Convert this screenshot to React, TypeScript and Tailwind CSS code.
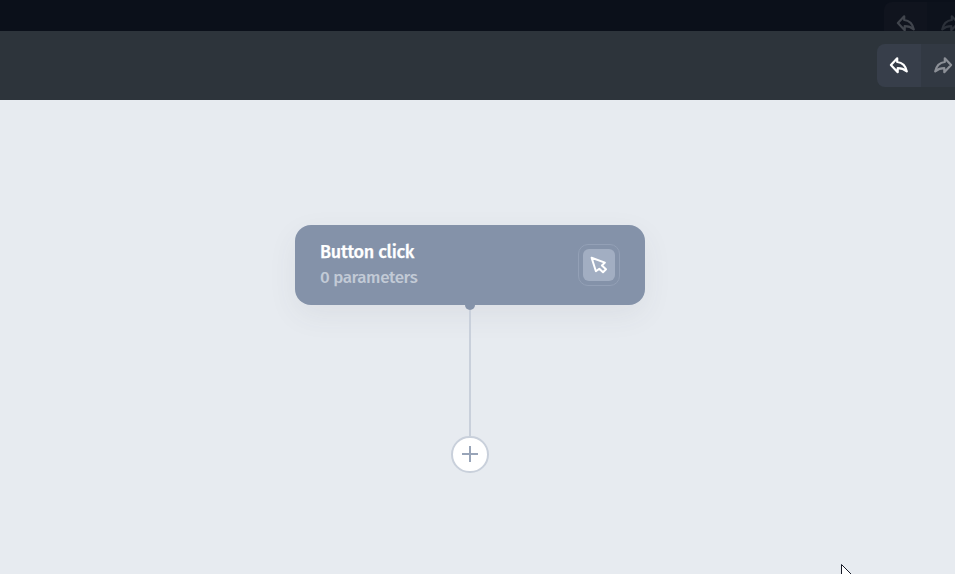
function ReplyIcon({ flip = false }: { flip?: boolean }) {
  return (
    <svg
      width="20"
      height="20"
      viewBox="0 0 20 20"
      fill="none"
      stroke="currentColor"
      strokeWidth="2.2"
      strokeLinejoin="round"
      strokeLinecap="round"
      className={flip ? "mb-px shrink-0 -scale-x-100" : "mb-px shrink-0"}
    >
      <path d="M1.9 10 8.2 3.3V7C13.4 7.4 16.6 11 17.8 16.4 14.9 14 12.3 13.2 8.7 13.2V17.2Z" />
    </svg>
  );
}

function HistoryButtons() {
  return (
    <div className="flex h-[43px] w-[88px] shrink-0 overflow-hidden rounded-lg">
      <button className="flex w-11 items-center justify-center bg-[#373e4a] text-white">
        <ReplyIcon />
      </button>
      <button className="flex w-11 items-center justify-center bg-[#323943] text-[#8c9097]">
        <ReplyIcon flip />
      </button>
    </div>
  );
}

function GhostHistoryButtons() {
  return (
    <div className="flex h-[43px] w-[88px] shrink-0 overflow-hidden rounded-lg">
      <div className="flex w-[43px] items-center justify-center bg-[#10141e] text-[#41454d]">
        <ReplyIcon />
      </div>
      <div className="flex w-[45px] shrink-0 items-center justify-center bg-[#0d121c] text-[#2b3039]">
        <ReplyIcon flip />
      </div>
    </div>
  );
}

function TriggerNode() {
  return (
    <div className="flex h-20 w-[350px] items-center justify-between rounded-2xl bg-[#8492a9] px-[25px] shadow-[0_10px_30px_rgba(70,75,85,0.07)]">
      <div className="whitespace-nowrap font-['Fira_Sans','Noto_Sans',sans-serif]">
        <div className="text-[18px] leading-[26px] font-medium tracking-[-0.26px] text-white [-webkit-text-stroke:0.25px_white]">
          Button click
        </div>
        <div className="text-[17px] leading-[26px] font-medium tracking-[-0.42px] text-[#c2cad6]">
          0 parameters
        </div>
      </div>
      <div className="flex size-[42px] items-center justify-center rounded-[10px] border border-[#93a0b6]">
        <div className="flex size-8 items-center justify-center rounded-md bg-[#a2aec2] text-white">
          <svg
            width="20"
            height="20"
            viewBox="0 0 20 20"
            fill="none"
            stroke="currentColor"
            strokeWidth="2"
            strokeLinejoin="round"
          >
            <path d="M2.6 2.8 15.9 7.6 12.9 10.5 17 14.3 14 17.3 10.3 13.7 6.9 16.2Z" />
          </svg>
        </div>
      </div>
    </div>
  );
}

export default function App() {
  return (
    <div className="flex h-[574px] w-[955px] flex-col overflow-hidden bg-[#e7ebf0]">
      <div className="flex h-[31px] shrink-0 items-start overflow-hidden bg-[#0b101a] pt-0.5 pl-[884px]">
        <GhostHistoryButtons />
      </div>
      <header className="flex h-[69px] shrink-0 items-start overflow-hidden bg-[#2d343b] pt-[13px] pl-[877px]">
        <HistoryButtons />
      </header>
      <main className="relative flex-1 overflow-hidden">
        <div className="absolute top-[125px] left-[295px] flex flex-col items-center">
          <TriggerNode />
          <div className="h-[5px] w-[10px] rounded-b-full bg-[#8492a9]" />
          <div className="h-[126px] w-0.5 bg-[#c9d0db]" />
          <button className="flex h-[37px] w-[38px] items-center justify-center rounded-full border-2 border-[#c9d0db] bg-white text-[#98a4b8]">
            <svg width="18" height="18" viewBox="0 0 18 18" stroke="currentColor" strokeWidth="2">
              <path d="M1 8H17M9 0V16" />
            </svg>
          </button>
        </div>
        <svg
          width="14"
          height="22"
          viewBox="0 0 14 22"
          className="absolute top-[464px] left-[841px]"
          fill="white"
          stroke="#171b28"
          strokeWidth="1"
        >
          <path d="M.5.5V17L4.5 13.5 7 20 10 19 7.5 12.5H12.5Z" />
        </svg>
      </main>
    </div>
  );
}
